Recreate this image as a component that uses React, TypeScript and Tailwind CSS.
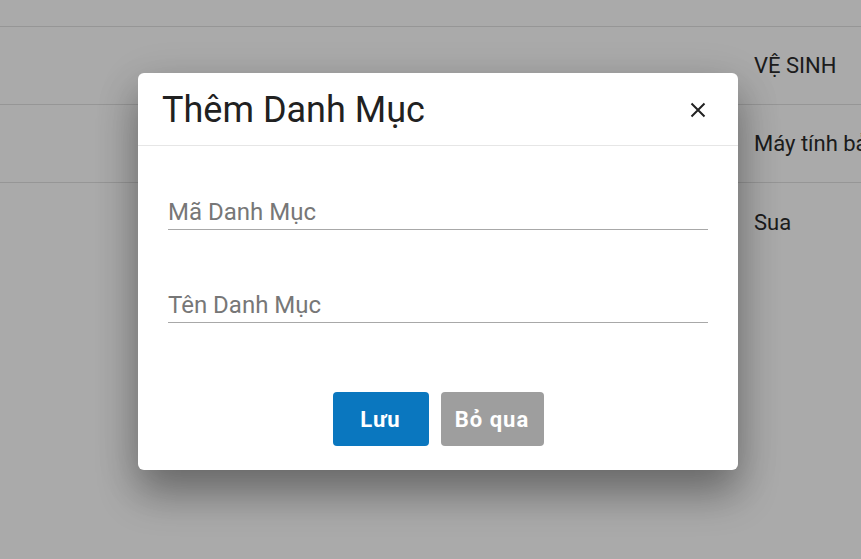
import React from "react";

export default function App() {
  const rows = ["VỆ SINH", "Máy tính bảng", "Sua"];
  return (
    <div className="relative w-[861px] h-[559px] overflow-hidden bg-white" style={{ fontFamily: "Roboto, 'Noto Sans', sans-serif" }}>
      {/* underlying page */}
      <div className="flex flex-col">
        <div className="h-[27px] border-b border-[#e2e2e2]" />
        {rows.map((r, i) => (
          <div
            key={i}
            className={
              i < 2
                ? "h-[78px] border-b border-[#e2e2e2] flex items-center pl-[754px] text-[22px] text-[#2a2a2a] whitespace-nowrap"
                : "h-[78px] flex items-center pl-[754px] text-[22px] text-[#2a2a2a] whitespace-nowrap"
            }
          >
            {r}
          </div>
        ))}
      </div>
      {/* overlay */}
      <div className="absolute inset-0 bg-black/[0.335] flex items-start pl-[138px] pt-[73px]">
        <div className="w-[600px] bg-white rounded-[6px] shadow-[0_24px_40px_rgba(0,0,0,0.32),0_9px_46px_rgba(0,0,0,0.12)]">
          <div className="h-[73px] flex items-center justify-between pl-6 pr-[32px] border-b border-[#e6e6e6]">
            <div className="text-[36px] leading-none text-[#212121] pt-[1px]">Thêm Danh Mục</div>
            <svg width="16" height="16" viewBox="0 0 16 16" className="mt-[1px]">
              <path d="M1.5 1.5 L14.5 14.5 M14.5 1.5 L1.5 14.5" stroke="#222" strokeWidth="2" />
            </svg>
          </div>
          <div className="px-[30px] pt-[44px]">
            <div className="h-[40px] border-b border-[#a8a8a8] flex items-center text-[24px] text-[#777] pt-[4px]">Mã Danh Mục</div>
            <div className="h-[40px] mt-[53px] border-b border-[#a8a8a8] flex items-center text-[24px] text-[#777] pt-[4px]">Tên Danh Mục</div>
          </div>
          <div className="flex justify-center gap-3 pt-[69px] pb-6">
            <button className="w-[96px] h-[54px] rounded-[4px] bg-[#0a77bf] text-white font-bold text-[22px] tracking-[1px]">Lưu</button>
            <button className="w-[103px] h-[54px] rounded-[4px] bg-[#9e9e9e] text-white font-bold text-[22px] tracking-[1px]">Bỏ qua</button>
          </div>
        </div>
      </div>
    </div>
  );
}
